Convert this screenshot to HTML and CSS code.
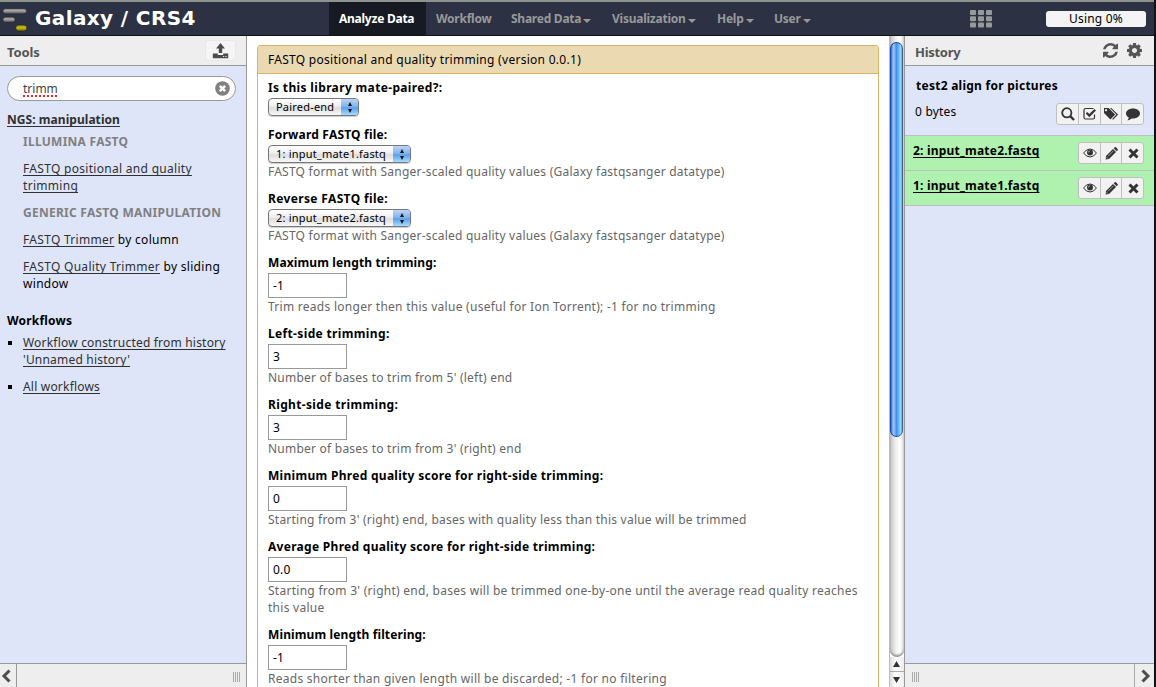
FILE: index.html
```html
<!DOCTYPE html>
<html lang="en">
<head>
<meta charset="utf-8">
<title>Galaxy / CRS4</title>
<link rel="stylesheet" href="styles.css">
</head>
<body>
<div class="app">
  <header class="masthead">
    <div class="brand">
      <svg class="logo" width="27" height="26" viewBox="0 0 27 26">
        <defs>
          <linearGradient id="silver" x1="0" y1="0" x2="0" y2="1"><stop offset="0" stop-color="#777"/><stop offset=".4" stop-color="#aaa"/><stop offset="1" stop-color="#444"/></linearGradient>
          <linearGradient id="gold" x1="0" y1="0" x2="0" y2="1"><stop offset="0" stop-color="#8e8600"/><stop offset=".45" stop-color="#c9bd16"/><stop offset="1" stop-color="#6f6900"/></linearGradient>
        </defs>
        <rect x="3" y="2.500" width="23.500" height="5.500" rx="2.700" fill="url(#silver)" stroke="#22242c" stroke-width=".6"/>
        <rect x="3" y="11" width="12" height="5.500" rx="2.700" fill="url(#silver)" stroke="#22242c" stroke-width=".6"/>
        <rect x="15.800" y="19" width="11" height="6" rx="3" fill="url(#gold)" stroke="#22242c" stroke-width=".6"/>
      </svg>
      <span class="brand-name">Galaxy / CRS4</span>
    </div>
    <nav class="tabs">
      <a class="tab tab-analyze">Analyze Data</a>
      <a class="tab tab-workflow">Workflow</a>
      <a class="tab tab-shared">Shared Data<i class="caret"></i></a>
      <a class="tab tab-visual">Visualization<i class="caret"></i></a>
      <a class="tab tab-help">Help<i class="caret"></i></a>
      <a class="tab tab-user">User<i class="caret"></i></a>
    </nav>
    <svg class="grid-icon" width="22" height="18" viewBox="0 0 22 18" fill="#999">
      <rect width="6" height="5" rx="1"/><rect x="8" width="6" height="5" rx="1"/><rect x="16" width="6" height="5" rx="1"/>
      <rect y="6.3" width="6" height="5" rx="1"/><rect x="8" y="6.3" width="6" height="5" rx="1"/><rect x="16" y="6.3" width="6" height="5" rx="1"/>
      <rect y="12.6" width="6" height="5" rx="1"/><rect x="8" y="12.6" width="6" height="5" rx="1"/><rect x="16" y="12.6" width="6" height="5" rx="1"/>
    </svg>
    <div class="quota">Using 0%</div>
  </header>

  <div class="columns">
    <aside class="panel tools">
      <div class="panel-head">
        <span class="panel-title">Tools</span>
        <span class="upload">
          <svg width="17" height="16" viewBox="0 0 17 16" fill="#4d4d4d"><path d="M8.500 0 13 5.500H10.200V10H6.800V5.500H4z"/><path d="M.8 10.500H5.800V12H11.200V10.500H16.200V15.200H.8z"/><path d="M11 13h1.200v1H11zM13.400 13h1.200v1h-1.200z" fill="#eee"/></svg>
        </span>
      </div>
      <div class="panel-body tools-body">
        <div class="search">
          <span class="search-text">trimm</span>
          <svg width="15" height="15" viewBox="0 0 15 15"><circle cx="7.500" cy="7.500" r="7.300" fill="#808080"/><path d="M4.800 4.800 10.200 10.200M10.200 4.800 4.800 10.200" stroke="#fff" stroke-width="2.500"/></svg>
        </div>
        <a class="section-title">NGS: manipulation</a>
        <div class="tool-label">ILLUMINA FASTQ</div>
        <div class="tool"><a>FASTQ positional and quality<br>trimming</a></div>
        <div class="tool-label next">GENERIC FASTQ MANIPULATION</div>
        <div class="tool"><a>FASTQ Trimmer</a> by column</div>
        <div class="tool"><a>FASTQ Quality Trimmer</a> by sliding<br>window</div>
        <div class="workflows-title">Workflows</div>
        <ul class="workflows">
          <li><a>Workflow constructed from history<br>'Unnamed history'</a></li>
          <li><a>All workflows</a></li>
        </ul>
      </div>
      <div class="panel-foot">
        <span class="collapse"><svg width="10" height="14" viewBox="0 0 10 14"><path d="M8.500 1.500 3 7l5.500 5.500" fill="none" stroke="#4d4d4d" stroke-width="3"/></svg></span>
        <span class="grip"></span>
      </div>
    </aside>

    <main class="center">
      <div class="form">
        <div class="form-title">FASTQ positional and quality trimming (version 0.0.1)</div>
        <div class="form-body">
          <div class="row wide"><label>Is this library mate-paired?:</label><div class="select short"><span>Paired-end</span><i class="stepper"></i></div></div>
          <div class="row"><label>Forward FASTQ file:</label><div class="select"><span>1: input_mate1.fastq</span><i class="stepper"></i></div><p>FASTQ format with Sanger-scaled quality values (Galaxy fastqsanger datatype)</p></div>
          <div class="row wide"><label>Reverse FASTQ file:</label><div class="select"><span>2: input_mate2.fastq</span><i class="stepper"></i></div><p>FASTQ format with Sanger-scaled quality values (Galaxy fastqsanger datatype)</p></div>
          <div class="row tight"><label>Maximum length trimming:</label><div class="input">-1</div><p class="loose">Trim reads longer then this value (useful for Ion Torrent); -1 for no trimming</p></div>
          <div class="row wide"><label>Left-side trimming:</label><div class="input">3</div><p>Number of bases to trim from 5' (left) end</p></div>
          <div class="row wide"><label>Right-side trimming:</label><div class="input">3</div><p>Number of bases to trim from 3' (right) end</p></div>
          <div class="row medium"><label>Minimum Phred quality score for right-side trimming:</label><div class="input">0</div><p>Starting from 3' (right) end, bases with quality less than this value will be trimmed</p></div>
          <div class="row medium"><label>Average Phred quality score for right-side trimming:</label><div class="input">0.0</div><p class="loose">Starting from 3' (right) end, bases will be trimmed one-by-one until the average read quality reaches<br>this value</p></div>
          <div class="row tight"><label>Minimum length filtering:</label><div class="input">-1</div><p class="loose">Reads shorter than given length will be discarded; -1 for no filtering</p></div>
        </div>
      </div>
    </main>

    <div class="scrollbar">
      <div class="track"><div class="thumb"></div></div>
      <div class="arrow"><svg width="7" height="6" viewBox="0 0 7 6"><path d="M3.500 0 7 6H0z" fill="#333"/></svg></div>
      <div class="arrow"><svg width="7" height="6" viewBox="0 0 7 6"><path d="M0 0h7L3.500 6z" fill="#333"/></svg></div>
    </div>

    <aside class="panel history">
      <div class="panel-head">
        <span class="panel-title">History</span>
        <span class="head-icons">
          <svg width="15" height="15" viewBox="0 0 1536 1536" fill="#555"><path d="M1511 928q0 5-1 7-64 268-268 434.500T764 1536q-146 0-282.500-55T238 1324l-129 129q-19 19-45 19t-45-19-19-45V960q0-26 19-45t45-19h448q26 0 45 19t19 45-19 45l-137 137q71 66 161 102t187 36q134 0 250-65t186-179q11-17 53-117 8-23 30-23h192q13 0 22.500 9.500t9.500 22.500zm25-800v448q0 26-19 45t-45 19h-448q-26 0-45-19t-19-45 19-45l138-138Q969 256 768 256q-134 0-250 65T332 500q-11 17-53 117-8 23-30 23H50q-13 0-22.500-9.500T18 608v-7q65-268 270-434.500T768 0q146 0 284 55.500T1297 212l130-129q19-19 45-19t45 19 19 45z"/></svg>
          <svg width="15" height="15" viewBox="0 0 1536 1536" fill="#555"><path d="M1024 768q0-106-75-181t-181-75-181 75-75 181 75 181 181 75 181-75 75-181zm512-109v222q0 12-8 23t-20 13l-185 28q-19 54-39 91 35 50 107 138 10 12 10 25t-9 23q-27 37-99 108t-94 71q-12 0-26-9l-138-108q-44 23-91 38-16 136-29 186-7 28-36 28H657q-14 0-24.500-8.500T621 1506l-28-184q-49-16-90-37l-141 107q-10 9-25 9-14 0-25-11-126-114-165-168-7-10-7-23 0-12 8-23 15-21 51-66.500t54-70.500q-27-50-41-99L29 913q-13-2-21-12.500T0 877V655q0-12 8-23t19-13l186-28q14-46 39-92-40-57-107-138-10-12-10-24 0-10 9-23 26-36 98.500-107.500T337 135q13 0 26 10l138 107q44-23 91-38 16-136 29-186 7-28 36-28h222q14 0 24.500 8.500T915 30l28 184q49 16 90 37l142-107q9-9 24-9 13 0 25 10 129 119 165 170 7 8 7 22 0 12-8 23-15 21-51 66.500t-54 70.500q26 50 41 98l183 28q13 2 21 12.500t8 23.500z"/></svg>
        </span>
      </div>
      <div class="panel-body">
        <div class="history-top">
          <div class="history-name">test2 align for pictures</div>
          <div class="history-line">
            <span>0 bytes</span>
            <div class="buttons four">
              <span><svg width="14" height="14" viewBox="0 0 14 14"><circle cx="5.800" cy="5.800" r="4.600" fill="none" stroke="#333" stroke-width="1.800"/><path d="M9.200 9.200 13 13" stroke="#333" stroke-width="2.400"/></svg></span>
              <span><svg width="14" height="14" viewBox="0 0 14 14" fill="none" stroke="#333"><path d="M11.500 7.500V10.500a1.500 1.500 0 0 1-1.500 1.500H2.500A1.500 1.500 0 0 1 1 10.500V3a1.500 1.500 0 0 1 1.500-1.500H10.500" stroke-width="1.200"/><path d="M3.500 5.800 6.300 8.600 12.200 2.700" stroke-width="2.200"/></svg></span>
              <span><svg width="16" height="14" viewBox="0 0 16 14" fill="#333"><path d="M1 1h4.600l6.600 6.500-4.800 5L1 6zM3 2a1.100 1.100 0 1 0 .1 0z" fill-rule="evenodd"/><path d="M7 1h1.300l6.800 6.500-5 5.200-.9-.8 4.200-4.400z"/></svg></span>
              <span><svg width="14" height="14" viewBox="0 0 14 14" fill="#333"><path d="M7 1.500c3.900 0 7 2.200 7 5s-3.100 5-7 5l-1.300-.1C4.300 12.600 2.700 13.200 1.300 13.300 2.100 12.500 2.700 11.600 2.800 10.500 1.100 9.600 0 8.100 0 6.500c0-2.800 3.100-5 7-5z"/></svg></span>
            </div>
          </div>
        </div>
        <div class="dataset">
          <a>2: input_mate2.fastq</a>
          <div class="buttons">
            <span><svg width="14" height="12" viewBox="0 0 14 12"><path d="M.6 6Q3.200 2 7 2T13.400 6Q10.800 10 7 10T.6 6z" fill="none" stroke="#333" stroke-width="1"/><circle cx="7" cy="5.500" r="3" fill="#333"/><path d="M5.400 5.500A1.600 1.600 0 0 1 7 3.900" fill="none" stroke="#eee" stroke-width=".6"/></svg></span>
            <span><svg width="13" height="13" viewBox="0 0 13 13" fill="#333"><path d="M1 9 8 2l3 3-7 7-3.300.4z"/><path d="m8.700 1.300 1-1q.7-.5 1.300 0l1.600 1.700q.5.600 0 1.200l-1 1z"/><path d="m3 9.300 5.200-5.200M1.500 10.200l1.400 1.400" stroke="#eee" stroke-width=".6"/></svg></span>
            <span><svg width="11" height="11" viewBox="0 0 11 11"><path d="m1.500 1.500 8 8m0-8-8 8" stroke="#333" stroke-width="3"/></svg></span>
          </div>
        </div>
        <div class="dataset">
          <a>1: input_mate1.fastq</a>
          <div class="buttons">
            <span><svg width="14" height="12" viewBox="0 0 14 12"><path d="M.6 6Q3.200 2 7 2T13.400 6Q10.800 10 7 10T.6 6z" fill="none" stroke="#333" stroke-width="1"/><circle cx="7" cy="5.500" r="3" fill="#333"/><path d="M5.400 5.500A1.600 1.600 0 0 1 7 3.900" fill="none" stroke="#eee" stroke-width=".6"/></svg></span>
            <span><svg width="13" height="13" viewBox="0 0 13 13" fill="#333"><path d="M1 9 8 2l3 3-7 7-3.300.4z"/><path d="m8.700 1.300 1-1q.7-.5 1.300 0l1.600 1.700q.5.600 0 1.200l-1 1z"/><path d="m3 9.300 5.200-5.200M1.500 10.200l1.400 1.400" stroke="#eee" stroke-width=".6"/></svg></span>
            <span><svg width="11" height="11" viewBox="0 0 11 11"><path d="m1.500 1.500 8 8m0-8-8 8" stroke="#333" stroke-width="3"/></svg></span>
          </div>
        </div>
      </div>
      <div class="panel-foot">
        <span class="grip"></span>
        <span class="collapse"><svg width="10" height="14" viewBox="0 0 10 14"><path d="M1.500 1.500 7 7l-5.500 5.500" fill="none" stroke="#4d4d4d" stroke-width="3"/></svg></span>
      </div>
    </aside>
  </div>
</div>
</body>
</html>
```
FILE: styles.css
```css
* { box-sizing: border-box; }
body {
  margin: 0;
  background: #111;
  color: #000;
  font: 12px/17px "Noto Sans", "Open Sans", sans-serif;
  letter-spacing: 0.2px;
  overflow: hidden;
}
a { color: #303030; text-decoration: underline; text-underline-offset: 2px; text-decoration-skip-ink: none; }
svg { display: block; flex: none; }
.app { width: 1154px; height: 687px; display: flex; flex-direction: column; background: #fff; overflow: hidden; white-space: nowrap; }

.masthead {
  height: 36px; flex: none; display: flex; align-items: center;
  background: #2c3143; border-top: 2px solid #8f938f; border-bottom: 1px solid #11131c;
}
.brand { width: 329px; display: flex; align-items: center; gap: 8px; }
.brand-name { color: #fff; font: bold 20px/26px "DejaVu Sans", sans-serif; letter-spacing: 0.38px; padding-bottom: 2px; }
.tabs { display: flex; height: 100%; width: 641px; }
.tab {
  display: flex; align-items: center; padding-left: 10px;
  color: #999; font-weight: bold; text-decoration: none; letter-spacing: -0.25px;
}
.tab-analyze { width: 97px; background: #181a23; color: #fff; }
.tab-workflow { width: 75px; }
.tab-shared { width: 101px; }
.tab-visual { width: 105px; }
.tab-help { width: 57px; }
.tab-user { width: 60px; }
.caret { margin: 4px 0 0 2px; border: 4px solid transparent; border-top-color: #999; border-bottom: 0; }
.quota {
  width: 100px; height: 16px; margin-left: 54px; border-radius: 3px;
  background: #f4f4f4; line-height: 16px; text-align: center;
}

.columns { display: flex; flex: 1; min-height: 0; }
.panel { display: flex; flex-direction: column; background: #dfe5f9; }
.tools { width: 247px; border-right: 1px solid #999; }
.history { width: 250px; border-left: 1px solid #999; }
.panel-head {
  height: 30px; flex: none; display: flex; align-items: center; justify-content: space-between;
  background: #eee; border-bottom: 1px solid #999;
}
.panel-title { font-weight: bold; font-size: 13px; letter-spacing: -0.1px; color: #555; padding: 3px 0 0 7px; }
.history .panel-title { padding-left: 10px; letter-spacing: -0.3px; }
.upload {
  width: 31px; height: 21px; margin-right: 10px; display: flex; align-items: center; justify-content: center;
  background: #f5f5f5; border-radius: 3px; border: 1px solid #e8e8e8;
}
.head-icons { display: flex; gap: 9px; margin-right: 12px; }
.panel-body { flex: 1; }
.tools-body { padding: 10px 10px 0 7px; }
.search {
  height: 25px; display: flex; align-items: center; justify-content: space-between;
  padding: 0 5px 0 15px; border: 1px solid #999; border-radius: 13px; background: #fff;
}
.search-text { color: #444; letter-spacing: 0; text-decoration: underline dotted #f22 2px; text-underline-offset: 2px; }
.section-title { display: block; margin-top: 10px; font-weight: bold; letter-spacing: 0.05px; }
.tool-label { margin: 5px 0 0 16px; font-weight: bold; color: #808080; letter-spacing: 0.26px; }
.tool-label.next { margin-top: 10px; }
.tool { margin: 10px 0 0 16px; letter-spacing: 0.3px; }
.workflows-title { margin-top: 20px; font-weight: bold; }
.workflows { margin: 5px 0 0; padding: 0 0 0 16px; list-style: none; }
.workflows li { position: relative; margin-bottom: 10px; }
.workflows li::before { content: ""; position: absolute; left: -15px; top: 7px; width: 4px; height: 4px; background: #000; }

.panel-foot { height: 24px; flex: none; display: flex; justify-content: space-between; align-items: center; background: #eee; border-top: 1px solid #999; }
.collapse { width: 17px; height: 100%; display: flex; align-items: center; padding-left: 1px; border-right: 1px solid #999; }
.history .collapse { width: 20px; padding-left: 6px; border-right: 0; border-left: 1px solid #aaa; }
.grip { width: 8px; height: 10px; margin: 3px 5px 0 7px; background: repeating-linear-gradient(90deg, #aaa 0 1px, transparent 1px 2px); }

.center { flex: 1; padding: 9px 10px 0; overflow: hidden; }
.form { height: 720px; width: 622px; border: 1px solid #d8b365; border-radius: 3px 3px 0 0; }
.form-title { height: 28px; padding: 5px 10px; background: #ebd9b2; border-bottom: 1px solid #d8b365; letter-spacing: 0.28px; }
.form-body { padding: 5px 10px; }
.row { margin-bottom: 10px; }
.row label { display: block; margin-bottom: 2px; font-weight: bold; }
.row.wide label { letter-spacing: 0.35px; }
.row.medium label { letter-spacing: 0.29px; }
.row.tight label { letter-spacing: 0.12px; }
.row p { margin: 0; color: #666; letter-spacing: 0.23px; }
.row p.loose { letter-spacing: 0.27px; }
.input { width: 79px; height: 25px; padding: 3px 4px; border: 1px solid #999; background: #fff; }
.select {
  display: flex; justify-content: space-between; width: 143px; height: 18px; padding-left: 7px;
  border: 1px solid #777; border-radius: 4px; overflow: hidden; font-size: 11px; line-height: 16px;
  background: linear-gradient(#fff, #eee 45%, #ddd 55%, #f8f8f8);
  box-shadow: 0 1px 1px #ccc;
}
.select.short { width: 91px; }
.stepper {
  width: 17px; display: flex; flex-direction: column; align-items: center; justify-content: center; gap: 3px;
  background: linear-gradient(#b9d5f6, #83b5ee 45%, #5ba0ec 55%, #a8dcff);
}
.stepper::before, .stepper::after { content: ""; border: 2.500px solid transparent; }
.stepper::before { border-top: 0; border-bottom: 4px solid #111; }
.stepper::after { border-bottom: 0; border-top: 4px solid #111; }

.scrollbar { width: 15px; flex: none; display: flex; flex-direction: column; border-left: 1px solid #bbb; }
.track { flex: 1; padding: 6px 0 0; border-radius: 0 0 8px 8px; background: linear-gradient(90deg, #c4c4c4, #eee 40%, #fff 70%, #ddd); box-shadow: inset 0 -2px 2px #999; }
.thumb {
  height: 395px; width: 13px; border-radius: 7px; border: 1px solid #1748b8; border-right-color: #466084;
  background: linear-gradient(90deg, #2c67d6, #9fc3ee 20%, #7aaeea 38%, #3f8de8 48%, #68b5fb 70%, #93dcff 88%, #5c9fd8);
}
.arrow { height: 15px; display: flex; align-items: center; justify-content: center; padding-right: 1px; background: linear-gradient(90deg, #ddd, #fff 40%, #eee); border-bottom: 1px solid #aaa; }
.arrow:last-child { border-bottom: 0; }

.history-top { height: 70px; padding: 11px 10px 0 11px; border-bottom: 1px solid #bfbfbf; }
.history-name { font-weight: bold; letter-spacing: 0.26px; }
.history-line { display: flex; justify-content: space-between; padding-top: 9px; }
.history-line > span { margin: 0 0 0 -1px; }
.buttons { display: flex; width: 66px; height: 22px; border: 1px solid #bfbfbf; border-radius: 3px; background: #f2f2f2; }
.buttons.four { width: 88px; }
.buttons span { flex: 1; display: flex; align-items: center; justify-content: center; padding-left: 1px; }
.buttons span + span { border-left: 1px solid #bfbfbf; }
.dataset { height: 35px; display: flex; justify-content: space-between; padding: 6px 10px 0 8px; background: #aff1af; border-bottom: 1px solid #bfbfbf; }
.dataset a { color: #000; font-weight: bold; }
```
